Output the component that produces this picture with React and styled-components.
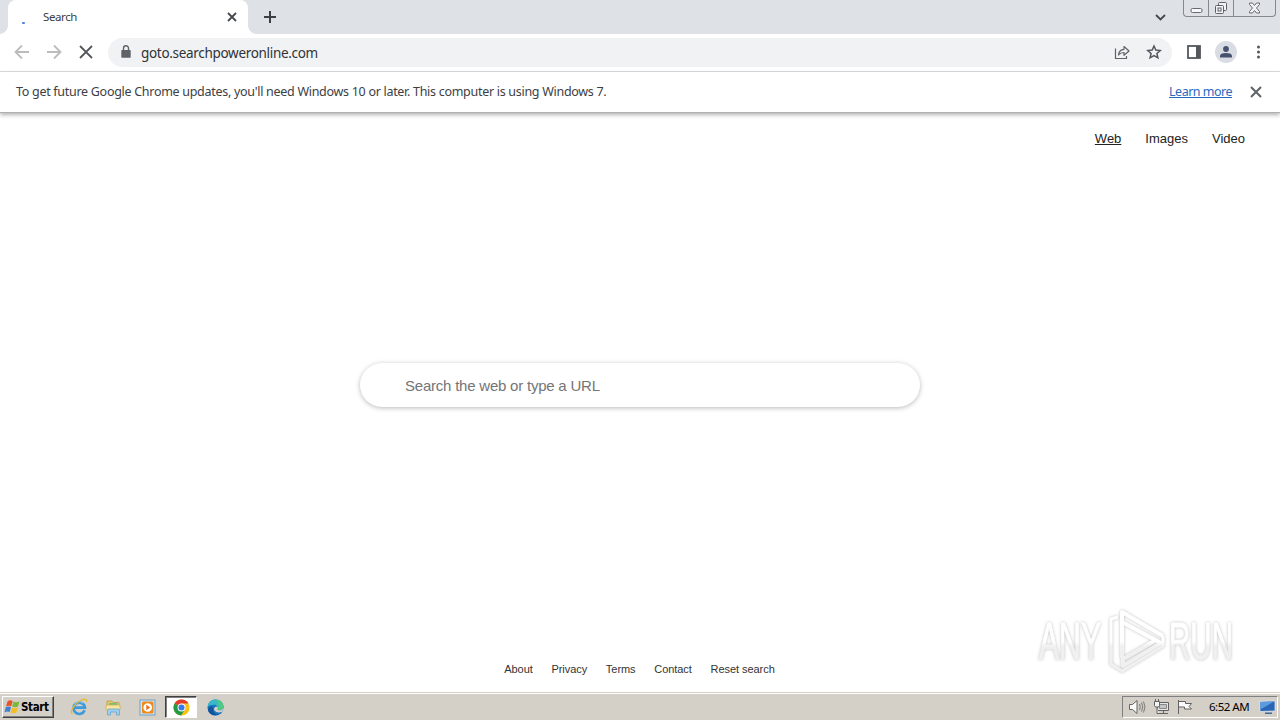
import React from 'react';
import styled, { createGlobalStyle, css } from 'styled-components';

const GlobalStyle = createGlobalStyle`
  * { box-sizing: border-box; }
  body {
    margin: 0;
    overflow: hidden;
    background: #fff;
    font-family: "Noto Sans", "Open Sans", sans-serif;
  }
  svg { display: block; flex: none; }
`;

const Screen = styled.div`
  display: flex;
  flex-direction: column;
  width: 1280px;
  height: 720px;
  overflow: hidden;
`;

/* ---------- tab strip ---------- */

const TabStrip = styled.div`
  display: flex;
  height: 34px;
  padding-left: 8px;
  background: #dee1e6;
`;

const Tab = styled.div`
  position: relative;
  display: flex;
  align-items: center;
  width: 240px;
  padding: 0 10px 0 14px;
  background: #fff;
  border-radius: 8px 8px 0 0;
  &::before, &::after {
    content: '';
    position: absolute;
    bottom: 0;
    width: 8px;
    height: 8px;
  }
  &::before {
    left: -8px;
    background: radial-gradient(circle at 0 0, transparent 7.5px, #fff 8px);
  }
  &::after {
    right: -8px;
    background: radial-gradient(circle at 100% 0, transparent 7.5px, #fff 8px);
  }
`;

const Spinner = styled.i`
  width: 3px;
  height: 2px;
  margin: 12px 18px 0 0;
  background: #4a7fd6;
  border-radius: 1px;
`;

const TabTitle = styled.span`
  flex: 1;
  font-size: 11.5px;
  line-height: 16px;
  letter-spacing: -0.4px;
  color: #3c4043;
`;

const NewTab = styled.div`
  display: flex;
  align-items: center;
  padding-left: 15px;
  flex: 1;
`;

const TabSearch = styled.div`
  display: flex;
  align-items: center;
  padding-right: 17px;
`;

const WindowButtons = styled.div`
  display: flex;
  width: 93px;
  height: 17px;
  margin-right: 4px;
  border: 1px solid #85888e;
  border-top: 0;
  border-radius: 0 0 4px 4px;
`;

const WindowButton = styled.div`
  display: flex;
  justify-content: center;
  align-items: center;
  width: ${({ $w }) => $w}px;
  & + & { border-left: 1px solid #85888e; }
`;

/* ---------- toolbar ---------- */

const Toolbar = styled.div`
  display: flex;
  align-items: center;
  height: 38px;
  padding: 0 12px 0 14px;
  border-bottom: 1px solid #dcdddf;
  background: #fff;
`;

const NavButtons = styled.div`
  display: flex;
  flex: none;
  gap: 16px;
  width: 94px;
  padding-bottom: 1px;
`;

const Omnibox = styled.div`
  display: flex;
  flex: none;
  align-items: center;
  width: 1064px;
  height: 29px;
  padding: 0 10px 1px;
  border-radius: 15px;
  background: #f0f2f4;
`;

const Url = styled.span`
  flex: 1;
  margin: 1px 0 0 7px;
  font-size: 13.5px;
  line-height: 20px;
  letter-spacing: -0.31px;
  color: #303236;
`;

const OmniIcons = styled.div`
  display: flex;
  gap: 16px;
`;

const ToolIcons = styled.div`
  display: flex;
  align-items: center;
  margin-left: 14px;
  padding-bottom: 1px;
`;

const Avatar = styled.div`
  display: flex;
  justify-content: center;
  align-items: center;
  width: 22px;
  height: 22px;
  margin: 0 14px 0 13px;
  border-radius: 50%;
  background: #d9dde3;
`;

/* ---------- info bar ---------- */

const InfoBar = styled.div`
  position: relative;
  display: flex;
  align-items: center;
  height: 41px;
  padding: 0 18px 0 16px;
  border-bottom: 1px solid #b0b0b0;
  box-shadow: 0 2px 4px rgba(0, 0, 0, 0.3);
  background: #fff;
`;

const InfoText = styled.span`
  flex: 1;
  margin-bottom: 1px;
  font-size: 12.5px;
  line-height: 18px;
  letter-spacing: -0.29px;
  color: #3c4043;
`;

const InfoLink = styled.a`
  margin: 0 18px 1px 0;
  font-size: 12.5px;
  line-height: 18px;
  letter-spacing: -0.5px;
  color: #2a69c0;
  text-decoration: underline;
`;

/* ---------- page ---------- */

const Page = styled.main`
  position: relative;
  display: flex;
  flex-direction: column;
  flex: 1;
  align-items: center;
  font-family: "Liberation Sans", Arial, sans-serif;
`;

const TopLinks = styled.nav`
  display: flex;
  align-self: flex-end;
  gap: 24px;
  padding: 18px 35px 0 0;
  height: 250px;
  font-size: 13px;
  line-height: 16px;
`;

const TopLink = styled.a`
  height: 16px;
  color: #222;
  ${({ $active }) => $active && css`text-decoration: underline;`}
`;

const SearchBox = styled.div`
  display: flex;
  align-items: center;
  width: 560px;
  height: 44px;
  padding: 0 45px;
  border-radius: 22px;
  box-shadow: 0 1px 5px rgba(0, 0, 0, 0.28);
  font-size: 15px;
  letter-spacing: -0.22px;
  color: #757575;
`;

const FooterLinks = styled.footer`
  display: flex;
  gap: 18.7px;
  margin-top: auto;
  padding: 0 1px 16px 0;
  font-size: 11px;
  line-height: 14px;
  letter-spacing: -0.05px;
  color: #333;
`;

const Watermark = styled.svg`
  position: absolute;
  right: 38px;
  bottom: 14px;
  overflow: visible;
  filter: drop-shadow(0 0 1.5px rgba(0, 0, 0, 0.25));
`;

/* ---------- taskbar ---------- */

const Taskbar = styled.div`
  display: flex;
  align-items: center;
  height: 28px;
  padding: 1px 2px 0;
  border-top: 1px solid #d4d0c8;
  box-shadow: inset 0 1px #fff;
  background: #d4d0c8;
`;

const StartButton = styled.div`
  display: flex;
  align-items: center;
  width: 52px;
  height: 22px;
  padding-left: 1px;
  border: 1px solid;
  border-color: #fff #404040 #404040 #fff;
  box-shadow: inset -1px -1px #808080;
  font: bold 11.5px "DejaVu Sans Condensed", "DejaVu Sans", sans-serif;
  letter-spacing: -0.35px;
  color: #000;
`;

const Launchers = styled.div`
  display: flex;
  flex: 1;
  margin-left: 8px;
`;

const Launcher = styled.div`
  display: flex;
  justify-content: center;
  align-items: center;
  width: ${({ $active }) => ($active ? 32 : 34)}px;
  height: 22px;
  ${({ $active }) => $active && css`
    margin: 0 1px;
    background: #fff;
    border: 1px solid;
    border-color: #404040 #fff #fff #404040;
    box-shadow: inset 1px 1px #808080;
  `}
`;

const Tray = styled.div`
  display: flex;
  align-items: center;
  width: 156px;
  height: 22px;
  padding-left: 6px;
  border: 1px solid;
  border-color: #808080 #fff #fff #808080;
`;

const Clock = styled.span`
  width: 41px;
  margin: 0 9px 2px 16px;
  font-size: 11.5px;
  letter-spacing: -0.5px;
  white-space: nowrap;
  color: #000;
`;

const Arrow = ({ flip }) => (
  <svg width="16" height="16" viewBox="0 0 16 16" fill="none" stroke="#babcbe" strokeWidth="1.8">
    <path d={flip ? 'M1 8H14M8 1.5L14.5 8L8 14.5' : 'M15 8H2M8 1.5L1.5 8L8 14.5'} />
  </svg>
);

const ChromeIcon = () => (
  <svg width="17" height="17" viewBox="0 0 18 18">
    <circle cx="9" cy="9" r="8.5" fill="#fbc116" />
    <path d="M9 9L1.6 4.8A8.5 8.5 0 0 1 16.4 4.8L9 4.8z" fill="#e33b2e" />
    <path d="M1.6 4.8A8.5 8.5 0 0 0 8.5 17.5L12.7 11.1L9 9z" fill="#229a49" />
    <circle cx="9" cy="9" r="4.2" fill="#fff" />
    <circle cx="9" cy="9" r="3.2" fill="#3b78e7" />
  </svg>
);

const EdgeIcon = () => (
  <svg width="17" height="17" viewBox="0 0 18 18">
    <circle cx="9" cy="9" r="8.5" fill="#1876bd" />
    <path d="M.7 8C1.5 3 5 .5 9 .5c5 0 8.500 3.500 8.500 7.300 0 3-2.500 4.500-5 4.200-1.500-.2-1.800-.8-1.200-1.600C12 9 11 6 7.500 6 4 6 1.500 7 .7 8z" fill="#38b8c9" />
    <path d="M9 .5c5 0 8.500 3.500 8.500 7.300 0 3-2.500 4.500-5 4.200-1.500-.2-1.800-.8-1.200-1.600C13.500 6 12 2 9 .5z" fill="#4fc983" />
    <path d="M6.500 9c-1 4 2 7.500 6.500 7.500C9 18.500 2 17 1 11c1-3 4-4 5.500-2z" fill="#13549c" />
    <path d="M17.500 9.500c-1 2-3 2.700-5 2.500-1.500-.2-1.800-.8-1.200-1.600.4-.8.300-1.500-.1-2.100C8.500 7.500 6.500 10 8 12.300c1.500 2.200 5 2.700 8.300 1.200z" fill="#d4d0c8" />
  </svg>
);

const IeIcon = () => (
  <svg width="18" height="18" viewBox="0 0 18 18" fill="none">
    <path d="M14.6 12.2A5.700 5.700 0 1 1 14.900 9.600H5" stroke="#3b9bdc" strokeWidth="2.7" />
    <path d="M4.600 5.500A5.700 5.700 0 0 1 13 5.200" stroke="#8fd0f4" strokeWidth="1" />
    <path d="M2.500 16C-1 14 4 6 10.500 2.500 14 .6 17.500.5 16.500 4" stroke="#e6b93a" strokeWidth="1.4" />
  </svg>
);

const FolderIcon = () => (
  <svg width="17" height="17" viewBox="0 0 17 17">
    <path d="M2 2h5l1 1.500h6V9H2z" fill="#e8c660" stroke="#b89a45" strokeWidth=".7" />
    <path d="M4 4h8v3H4z" fill="#7bbf7a" />
    <path d="M1 6h14v5H1z" fill="#f8e5a0" stroke="#c9ab54" strokeWidth=".7" />
    <path d="M2.500 16v-4.500q0-1.500 1.500-1.500h9q1.500 0 1.500 1.500V16h-3v-3h-6v3z" fill="#9ed0ee" stroke="#5b9fcb" strokeWidth=".7" />
  </svg>
);

const MediaIcon = () => (
  <svg width="17" height="17" viewBox="0 0 17 17">
    <rect x="1" y="1" width="15" height="15" fill="#cfe6f5" stroke="#6c9fc6" />
    <rect x="3" y="2.5" width="11.5" height="12" rx="1.5" fill="#ef8b1d" />
    <circle cx="8.7" cy="8.500" r="4.300" fill="#fff" />
    <path d="M7.300 5.800l4 2.700-4 2.700z" fill="#e8720c" />
  </svg>
);

const Flag = () => (
  <svg width="17" height="16" viewBox="0 0 17 16">
    <path d="M3.500 2.500Q6 .5 8.700 2L7.300 7.200Q5 6 2 7.500z" fill="#e8542a" />
    <path d="M9.500 2.500Q12 4 15.500 2.300L14 7.600Q11 9 8.200 7.600z" fill="#78b83a" />
    <path d="M1.800 8.300Q4.500 6.800 7 8L5.700 13Q3.500 12 .5 13.300z" fill="#3f80d2" />
    <path d="M8 8.500Q11 10 13.800 8.400L12.500 13.500Q9.500 15 6.700 13.500z" fill="#f5bd24" />
  </svg>
);

const TrayIcons = () => (
  <svg width="64" height="18" viewBox="0 0 64 18" fill="none" stroke="#626262">
    <path d="M.5 6.500h3l4.500-4v13l-4.500-4h-3z" fill="#fafafa" />
    <path d="M10.500 6q1.500 3 0 6M12.500 4.500q2.500 4.500 0 9M14.500 3.500q3 5.500 0 11" strokeWidth=".8" />
    <path d="M28.500 4.500h11v8h-11z" fill="#e5e5e5" />
    <path d="M30.500 6.500h7v4h-7z" fill="#c5c5c5" stroke="#888" />
    <path d="M30 15.500h9M34.500 13v2" />
    <path d="M25.500 3.500h5v4l-1 1.500h-3l-1-1.500zM26.500 1v2.500M29.500 1v2.500M28 9v6.500h2" fill="#f4f4f4" />
    <path d="M49.500 2v14M50 3.500h6.500v2h6l-2.500 3 2.500 2.500h-7v-2H50" fill="#fafafa" />
  </svg>
);

const Browser = () => (
  <>
    <TabStrip>
      <Tab>
        <Spinner />
        <TabTitle>Search</TabTitle>
        <svg width="12" height="12" viewBox="0 0 12 12" stroke="#45494d" strokeWidth="1.8"><path d="M2 2l8 8M10 2l-8 8" /></svg>
      </Tab>
      <NewTab>
        <svg width="14" height="14" viewBox="0 0 14 14" stroke="#3c4043" strokeWidth="2"><path d="M7 1v12M1 7h12" /></svg>
      </NewTab>
      <TabSearch>
        <svg width="11" height="7" viewBox="0 0 11 7" fill="none" stroke="#45494d" strokeWidth="1.8"><path d="M1 1l4.500 4.500L10 1" /></svg>
      </TabSearch>
      <WindowButtons>
        <WindowButton $w={24}>
          <svg width="13" height="17" viewBox="0 0 13 17"><rect x="1" y="8.500" width="11" height="4" rx="1.500" fill="#f7f8fa" stroke="#666a70" /></svg>
        </WindowButton>
        <WindowButton $w={25}>
          <svg width="14" height="16" viewBox="0 0 14 16" fill="#f1f2f4" stroke="#5d6167">
            <rect x="4.500" y="2.500" width="8" height="8" rx="1" />
            <rect x="1.500" y="5.500" width="8" height="8" rx="1" />
            <rect x="4" y="8" width="3" height="3" />
          </svg>
        </WindowButton>
        <WindowButton $w={42}>
          <svg width="13" height="12" viewBox="0 0 13 12" fill="#f1f2f4" stroke="#666a70"><path d="M1.500 1h3l2 2.500 2-2.500h3v1.500L8.500 6l3 3.500V11h-3l-2-2.500-2 2.500h-3V9.500l3-3.500-3-3.500z" /></svg>
        </WindowButton>
      </WindowButtons>
    </TabStrip>

    <Toolbar>
      <NavButtons>
        <Arrow />
        <Arrow flip />
        <svg width="16" height="16" viewBox="0 0 16 16" stroke="#54585c" strokeWidth="1.8"><path d="M2 2l12 12M14 2L2 14" /></svg>
      </NavButtons>
      <Omnibox>
        <svg width="16" height="16" viewBox="0 0 16 16" fill="#5f6368">
          <path d="M4 6h8q.7 0 .7.700v6.300q0 .7-.7.700H4q-.7 0-.7-.7V6.700Q3.300 6 4 6z" />
          <path d="M5.500 6.500V4.300a2.500 2.500 0 0 1 5 0v2.200" fill="none" stroke="#5f6368" strokeWidth="1.4" />
        </svg>
        <Url>goto.searchpoweronline.com</Url>
        <OmniIcons>
          <svg width="16" height="16" viewBox="0 0 16 16" fill="none" stroke="#5f6368" strokeWidth="1.2">
            <path d="M1.500 4.500v10h11V12" />
            <path d="M4.500 11Q5 5.500 10 5.300V2.500L15 7l-5 4.300V8.500Q6.500 8.500 4.500 11z" strokeLinejoin="round" />
          </svg>
          <svg width="16" height="16" viewBox="0 0 16 16" fill="none" stroke="#54585c" strokeWidth="1.5">
            <path d="M8 2l1.800 4.100 4.400.4-3.300 3 1 4.300L8 11.500l-3.900 2.300 1-4.300-3.300-3 4.400-.4z" />
          </svg>
        </OmniIcons>
      </Omnibox>
      <ToolIcons>
        <svg width="16" height="16" viewBox="0 0 16 16">
          <rect x="2" y="2" width="12" height="12" fill="none" stroke="#54575b" strokeWidth="1.8" />
          <path d="M10 2h4v12h-4z" fill="#54575b" />
        </svg>
        <Avatar>
          <svg width="14" height="14" viewBox="0 0 14 14" fill="#46536e"><circle cx="7" cy="4" r="2.9" /><path d="M1 12.500V11q0-3 6-3t6 3v1.500z" /></svg>
        </Avatar>
        <svg width="16" height="16" viewBox="0 0 16 16" fill="#54575b"><circle cx="7.5" cy="3" r="1.5" /><circle cx="7.5" cy="8" r="1.5" /><circle cx="7.5" cy="13" r="1.5" /></svg>
      </ToolIcons>
    </Toolbar>

    <InfoBar>
      <InfoText>To get future Google Chrome updates, you'll need Windows 10 or later. This computer is using Windows 7.</InfoText>
      <InfoLink>Learn more</InfoLink>
      <svg width="12" height="12" viewBox="0 0 12 12" stroke="#5f6368" strokeWidth="2"><path d="M1 1l10 10M11 1L1 11" /></svg>
    </InfoBar>
  </>
);

const footer = ['About', 'Privacy', 'Terms', 'Contact', 'Reset search'];

const App = () => (
  <Screen>
    <GlobalStyle />
    <Browser />
    <Page>
      <TopLinks>
        <TopLink $active>Web</TopLink>
        <TopLink>Images</TopLink>
        <TopLink>Video</TopLink>
      </TopLinks>
      <SearchBox>Search the web or type a URL</SearchBox>
      <FooterLinks>
        {footer.map((label) => <span key={label}>{label}</span>)}
      </FooterLinks>
      <Watermark width="210" height="76" viewBox="0 0 210 76">
        <defs>
          <linearGradient id="fade" gradientUnits="userSpaceOnUse" x1="0" y1="18" x2="0" y2="66">
            <stop offset=".45" stopColor="#fff" />
            <stop offset=".55" stopColor="#f0f0f0" />
          </linearGradient>
        </defs>
        <g fill="url(#fade)" stroke="url(#fade)" strokeWidth="1" fontFamily="Liberation Sans" fontSize="51">
          <text x="7" y="57" textLength="62" lengthAdjust="spacingAndGlyphs">ANY</text>
          <text x="137" y="57" textLength="64" lengthAdjust="spacingAndGlyphs">RUN</text>
        </g>
        <g fill="none" stroke="url(#fade)" strokeWidth="4" strokeLinejoin="round">
          <path d="M90 56V10L131 34" />
          <path d="M90 20L129 41L91 64V57L124 38" />
          <path d="M86 15L79 17V62L90 69L131 44V34" strokeWidth="3" />
        </g>
      </Watermark>
    </Page>
    <Taskbar>
      <StartButton><Flag />Start</StartButton>
      <Launchers>
        <Launcher><IeIcon /></Launcher>
        <Launcher><FolderIcon /></Launcher>
        <Launcher><MediaIcon /></Launcher>
        <Launcher $active><ChromeIcon /></Launcher>
        <Launcher><EdgeIcon /></Launcher>
      </Launchers>
      <Tray>
        <TrayIcons />
        <Clock>6:52 AM</Clock>
        <svg width="17" height="16" viewBox="0 0 17 16">
          <path d="M1 2.500L16 2v10L1 12.500z" fill="#2a66b5" stroke="#e8eef5" strokeWidth=".7" />
          <path d="M1.500 3L15 2.500 4 9l-2.500 1z" fill="#5b9be0" />
          <path d="M6 13.500h7v1.500H6z" fill="#3d6a9e" />
        </svg>
      </Tray>
    </Taskbar>
  </Screen>
);

export default App;
